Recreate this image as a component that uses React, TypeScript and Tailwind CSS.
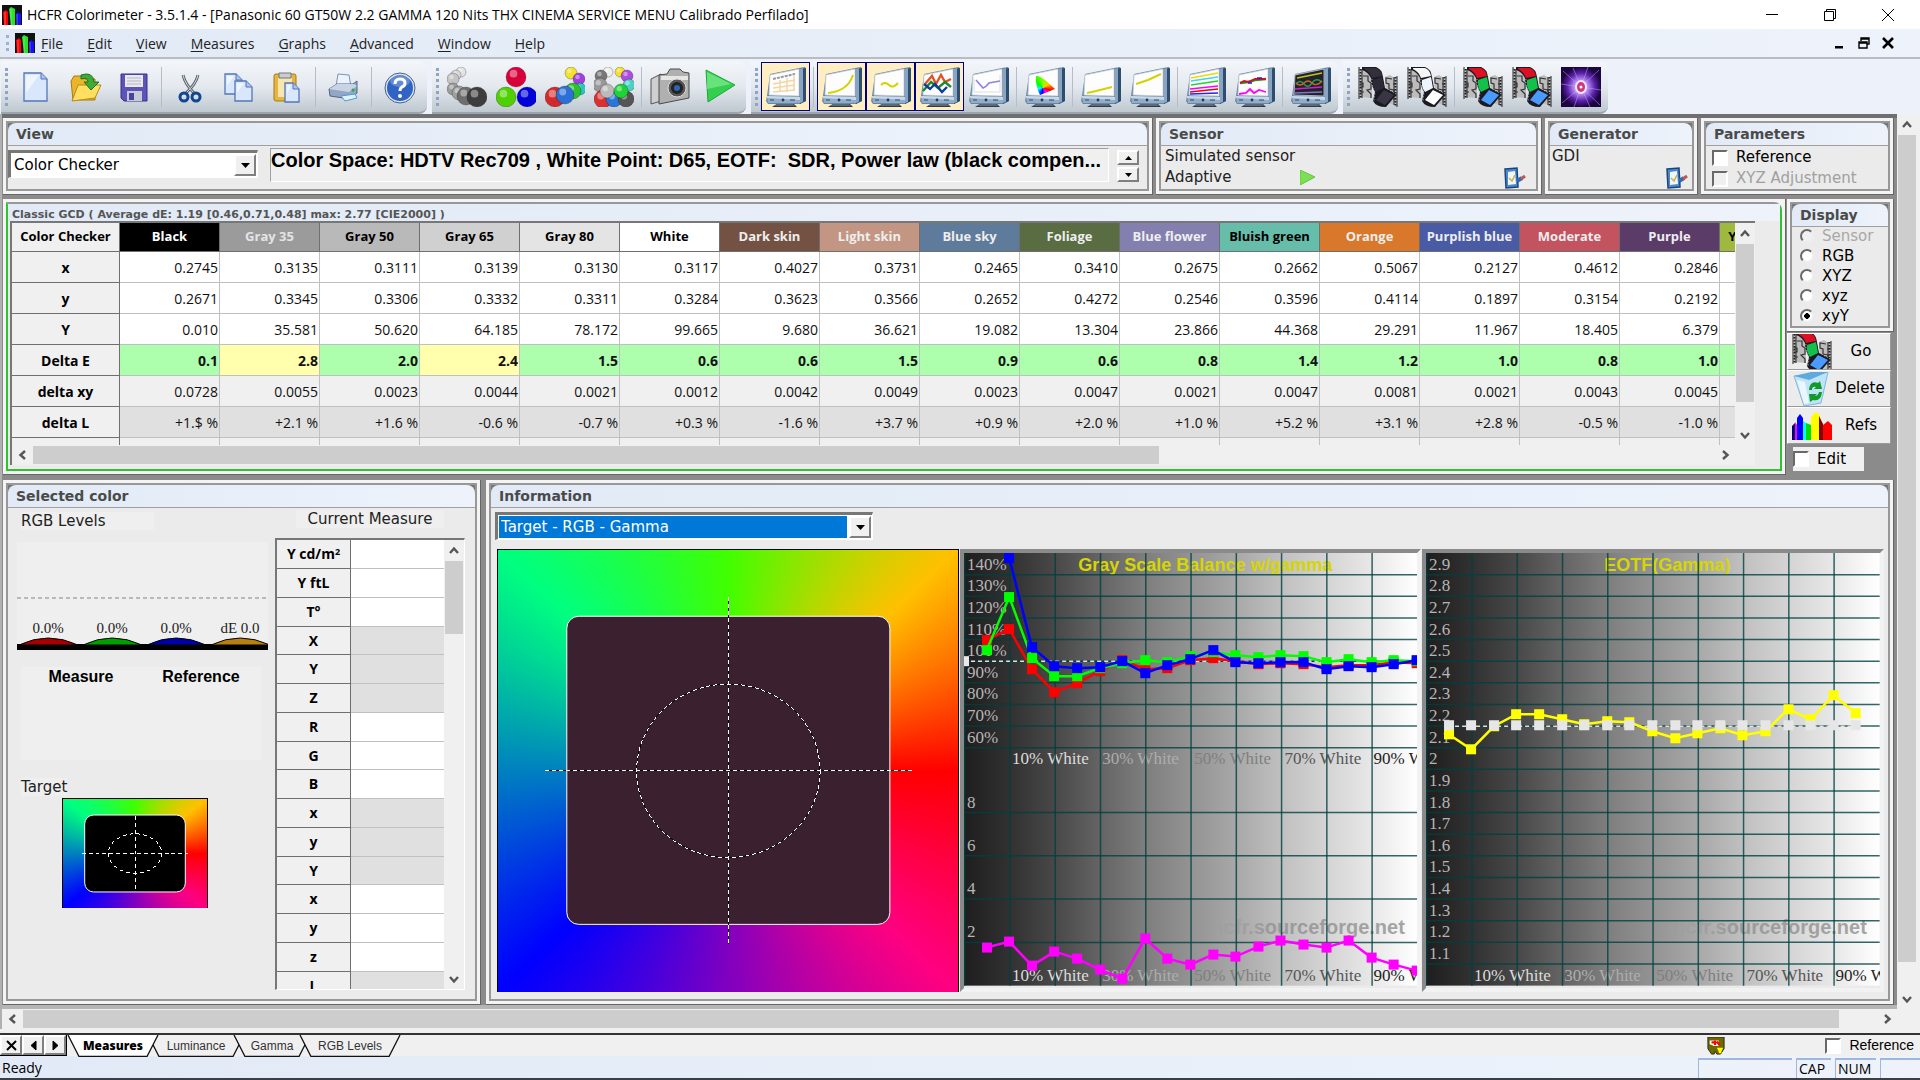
import { useState } from 'react';
import type { ReactNode } from 'react';

type Swatch = {
  name: string;
  head: string;
  x: string;
  y: string;
  Y: string;
  dE: string;
  dxy: string;
  dL: string;
};

const swatches: Swatch[] = [
  { name: 'Black', head: 'bg-black text-white', x: '0.2745', y: '0.2671', Y: '0.010', dE: '0.1', dxy: '0.0728', dL: '+1.$ %' },
  { name: 'Gray 35', head: 'bg-[#9b9b9b] text-[#e4e4e4]', x: '0.3135', y: '0.3345', Y: '35.581', dE: '2.8', dxy: '0.0055', dL: '+2.1 %' },
  { name: 'Gray 50', head: 'bg-[#b9b9b9] text-black', x: '0.3111', y: '0.3306', Y: '50.620', dE: '2.0', dxy: '0.0023', dL: '+1.6 %' },
  { name: 'Gray 65', head: 'bg-[#d0d0d0] text-black', x: '0.3139', y: '0.3332', Y: '64.185', dE: '2.4', dxy: '0.0044', dL: '-0.6 %' },
  { name: 'Gray 80', head: 'bg-[#e4e4e4] text-black', x: '0.3130', y: '0.3311', Y: '78.172', dE: '1.5', dxy: '0.0021', dL: '-0.7 %' },
  { name: 'White', head: 'bg-white text-black', x: '0.3117', y: '0.3284', Y: '99.665', dE: '0.6', dxy: '0.0012', dL: '+0.3 %' },
  { name: 'Dark skin', head: 'bg-[#745243] text-[#eeeeee]', x: '0.4027', y: '0.3623', Y: '9.680', dE: '0.6', dxy: '0.0042', dL: '-1.6 %' },
  { name: 'Light skin', head: 'bg-[#c29682] text-[#eeeeee]', x: '0.3731', y: '0.3566', Y: '36.621', dE: '1.5', dxy: '0.0049', dL: '+3.7 %' },
  { name: 'Blue sky', head: 'bg-[#5f7b9c] text-[#eeeeee]', x: '0.2465', y: '0.2652', Y: '19.082', dE: '0.9', dxy: '0.0023', dL: '+0.9 %' },
  { name: 'Foliage', head: 'bg-[#596c42] text-[#eeeeee]', x: '0.3410', y: '0.4272', Y: '13.304', dE: '0.6', dxy: '0.0047', dL: '+2.0 %' },
  { name: 'Blue flower', head: 'bg-[#8380b0] text-[#eeeeee]', x: '0.2675', y: '0.2546', Y: '23.866', dE: '0.8', dxy: '0.0021', dL: '+1.0 %' },
  { name: 'Bluish green', head: 'bg-[#66bdaa] text-black', x: '0.2662', y: '0.3596', Y: '44.368', dE: '1.4', dxy: '0.0047', dL: '+5.2 %' },
  { name: 'Orange', head: 'bg-[#d9782a] text-[#eeeeee]', x: '0.5067', y: '0.4114', Y: '29.291', dE: '1.2', dxy: '0.0081', dL: '+3.1 %' },
  { name: 'Purplish blue', head: 'bg-[#4a5ba5] text-[#eeeeee]', x: '0.2127', y: '0.1897', Y: '11.967', dE: '1.0', dxy: '0.0021', dL: '+2.8 %' },
  { name: 'Moderate', head: 'bg-[#c3535f] text-[#eeeeee]', x: '0.4612', y: '0.3154', Y: '18.405', dE: '0.8', dxy: '0.0043', dL: '-0.5 %' },
  { name: 'Purple', head: 'bg-[#5b3c69] text-[#eeeeee]', x: '0.2846', y: '0.2192', Y: '6.379', dE: '1.0', dxy: '0.0045', dL: '-1.0 %' },
];

const measureRows: { label: string; key: keyof Swatch; cell: string }[] = [
  { label: 'x', key: 'x', cell: 'bg-white' },
  { label: 'y', key: 'y', cell: 'bg-white' },
  { label: 'Y', key: 'Y', cell: 'bg-white' },
  { label: 'Delta E', key: 'dE', cell: 'bg-[#adffad] font-bold' },
  { label: 'delta xy', key: 'dxy', cell: 'bg-[#f0f0f0]' },
  { label: 'delta L', key: 'dL', cell: 'bg-[#e0e0e0]' },
];

const currentRows: { label: ReactNode; shaded?: boolean }[] = [
  { label: <>Y cd/m<sup className="text-[9px]">2</sup></> },
  { label: 'Y ftL' },
  { label: 'T°' },
  { label: 'X', shaded: true },
  { label: 'Y', shaded: true },
  { label: 'Z', shaded: true },
  { label: 'R' },
  { label: 'G' },
  { label: 'B' },
  { label: 'x', shaded: true },
  { label: 'y', shaded: true },
  { label: 'Y', shaded: true },
  { label: 'x' },
  { label: 'y' },
  { label: 'z' },
  { label: 'L', shaded: true },
];

const ui = "font-['DejaVu_Sans',sans-serif]";
const segoe = "font-['Open_Sans','Noto_Sans',sans-serif]";
const arial = "font-['Liberation_Sans',Arial,sans-serif]";

const bluebar = 'bg-linear-to-r from-[#e1eaf6] to-[#eef3fb]';
const raised = 'border-2 border-t-white border-l-white border-r-[#808080] border-b-[#808080] bg-[#f0f0f0]';
const sunken = 'border-2 border-t-[#696969] border-l-[#696969] border-r-white border-b-white';

/* ---------- small controls ---------- */

function Chevron({ dir }: { dir: 'up' | 'down' | 'left' | 'right' }) {
  const d = {
    up: 'M2 8 L6 3.5 L10 8',
    down: 'M2 4 L6 8.5 L10 4',
    left: 'M8 2 L3.5 6 L8 10',
    right: 'M4 2 L8.5 6 L4 10',
  }[dir];
  return (
    <svg width="12" height="12" viewBox="0 0 12 12" fill="none" stroke="#555" strokeWidth="2.4">
      <path d={d} />
    </svg>
  );
}

function VScroll({ thumb }: { thumb: string }) {
  return (
    <div className="flex w-5 shrink-0 flex-col items-center bg-[#f0f0f0] px-px">
      <button aria-label="Scroll up" className="flex h-[21px] shrink-0 items-center">
        <Chevron dir="up" />
      </button>
      <div className="w-full flex-1">
        <div className={`w-full bg-[#cdcdcd] ${thumb}`} />
      </div>
      <button aria-label="Scroll down" className="flex h-[21px] shrink-0 items-center">
        <Chevron dir="down" />
      </button>
    </div>
  );
}

function HScroll({ thumb }: { thumb: string }) {
  return (
    <div className="flex h-5 shrink-0 items-center bg-[#f0f0f0] py-px">
      <button aria-label="Scroll left" className="flex w-[21px] shrink-0 justify-center">
        <Chevron dir="left" />
      </button>
      <div className="h-full flex-1">
        <div className={`h-full bg-[#cdcdcd] ${thumb}`} />
      </div>
      <button aria-label="Scroll right" className="flex w-[21px] shrink-0 justify-center">
        <Chevron dir="right" />
      </button>
    </div>
  );
}

function Check({ label, disabled, className = '' }: { label: string; disabled?: boolean; className?: string }) {
  return (
    <label className={`flex items-center gap-2 ${disabled ? 'text-[#a0a0a0]' : 'text-black'} ${className}`}>
      <input
        type="checkbox"
        disabled={disabled}
        className={`size-4 shrink-0 appearance-none ${sunken} ${disabled ? 'bg-[#f0f0f0]' : 'bg-white'}`}
      />
      {label}
    </label>
  );
}

function Combo({ label, value, active, className = '' }: { label: string; value: string; active?: boolean; className?: string }) {
  return (
    <div className={`flex h-7 items-center border-t-3 border-l-3 border-r border-b border-t-[#777] border-l-[#777] border-r-white border-b-white bg-white p-px ${className}`}>
      <select
        aria-label={label}
        defaultValue={value}
        className={`h-full min-w-0 flex-1 appearance-none pl-0.5 text-[15px] ${ui} ${active ? 'bg-[#0078d7] text-white' : 'bg-white text-black'}`}
      >
        <option>{value}</option>
      </select>
      <span aria-hidden className={`ml-0.5 flex h-full w-[22px] items-center justify-center ${raised}`}>
        <svg width="9" height="5" viewBox="0 0 9 5"><path d="M0 0H9L4.5 5Z" /></svg>
      </span>
    </div>
  );
}

function Panel({ title, children, className = '', body = '' }: { title: string; children: ReactNode; className?: string; body?: string }) {
  return (
    <section className={`flex flex-col border-r border-b border-[#666] bg-[#f4f4f4] p-[3px] ${className}`}>
      <div className="flex min-h-0 flex-1 flex-col border-2 border-[#989898] bg-[#777]">
        <h2 className={`h-[22px] shrink-0 rounded-t-lg pl-2 text-[14px] leading-[23px] font-bold text-[#4a4a4a] ${ui} ${bluebar}`}>
          {title}
        </h2>
        <div className={`min-h-0 flex-1 border-t border-[#a0a0a0] bg-[#ebebeb] ${body}`}>{children}</div>
      </div>
    </section>
  );
}

/* ---------- icons ---------- */

function Icon({ children }: { children: ReactNode }) {
  return (
    <svg className="shrink-0" width="40" height="40" viewBox="0 0 40 40" fill="none">
      {children}
    </svg>
  );
}

function AppLogo() {
  return (
    <svg width="20" height="20" viewBox="0 0 20 20">
      <rect width="20" height="20" fill="#111" />
      <path d="M1 7L4 5L6 7V20H2Z" fill="#f00" />
      <path d="M7 4L9 2L13 4V20H9Z" fill="#2ae22a" />
      <path d="M14 9L16 7L19 9V20H15Z" fill="#11f" />
      <path d="M3 7v13M9 4v16M15 9v11" stroke="#fff" strokeOpacity=".35" />
    </svg>
  );
}

function Balls({ items }: { items: [number, number, number, string][] }) {
  return (
    <Icon>
      {items.map(([x, y, r, c], i) => (
        <g key={i}>
          <circle cx={x} cy={y} r={r} fill={c} stroke="#000" strokeOpacity=".35" strokeWidth=".7" />
          <circle cx={x - r / 4} cy={y - r / 3} r={r / 2.6} fill="#fff" fillOpacity=".4" />
        </g>
      ))}
    </Icon>
  );
}

function Monitor({ children, dark }: { children?: ReactNode; dark?: boolean }) {
  return (
    <Icon>
      <path d="M14 35 L26 35 L31 40 H6 Z" fill="#2f3c49" />
      <path d="M11 37 L27 37 L29 39 H8 Z" fill="#5d6b78" />
      <path d="M4 7 L33 1 L39 0 L40 2 V34 L34 37 H2 L0 34 L1 29 Z" fill="#6b86a1" />
      <path d="M34 2 L40 1 V34 L34 37 Z" fill="#2f4e6e" />
      <path d="M34 2 L37 1 V35 L34 36 Z" fill="#88a6c4" />
      <path d="M1 29 L34 30 V36 L2 36 Z" fill="#91adca" />
      <path d="M1 29 L34 30 V33 L1 31 Z" fill="#c9d8e7" />
      <path d="M4 8 L33 2 V29 L3 28 Z" fill={dark ? '#22222a' : '#fdfdfd'} stroke="#c3cfdb" strokeWidth=".8" />
      <circle cx="17" cy="33" r="1.4" fill="#1c3c62" />
      <path d="M4 33h4M24 33h5" stroke="#2f4a68" />
      {children}
    </Icon>
  );
}

function Film({ frames }: { frames: [string, string, string] }) {
  return (
    <Icon>
      <path d="M2 2 L14 8 V31 L2 30 Z M27 10 L32 8 L38 12 V38 L28 36 Z" fill="#bcbcbc" />
      <path d="M5 9h5v5l3 2v6l-4 1 4 4v4M2 16h3v4h-3M2 25h4M34 12l-6-1v5l3 1v5l5 1v4l-4 2M38 17h-3M38 32h-3" stroke="#333" strokeWidth="1.2" />
      <path d="M1 0V32M4 2V31M36 10V38M39 9V40" stroke="#222" strokeWidth="1" />
      <path d="M2.500 2V31M37.500 10V39" stroke="#222" strokeWidth="2" strokeDasharray="1.500 1.500" />
      <path d="M4 0 H18 Q24 2 25 10 L27 21 L39 27 L28 40 Q18 40 15 34 L17 25 Q13 18 13 11 Q10 5 4 3 Z" fill="#1b1a22" />
      <path d="M6 1 H18 Q23 3 24 9 L14 11 Q12 5 6 2 Z" fill={frames[0]} />
      <path d="M15 13 L24 10 L26 21 L18 25 Q14 20 15 13 Z" fill={frames[1]} />
      <path d="M26 23 L36 28 L27 38 L18 33 Z" fill={frames[2]} />
      <path d="M14 12 Q13 19 17 25 L16 34M26 11 L28 21 L38 27" stroke="#ddd" strokeWidth=".8" strokeDasharray="1 2" />
    </Icon>
  );
}

function PageShape({ x = 0, y = 0, w = 23, h = 28 }: { x?: number; y?: number; w?: number; h?: number }) {
  return (
    <g transform={`translate(${x} ${y})`}>
      <path d={`M0 0 H${w - 6} L${w} 6 V${h} H0 Z`} fill="#d8e7fb" stroke="#5475b8" strokeWidth="1.3" />
      <path d={`M${w - 6} 0 V6 H${w}`} fill="#a9c5ef" stroke="#5475b8" strokeWidth="1" />
      <path d={`M2 2 H${w - 8} L2 ${h - 8} Z`} fill="#fff" fillOpacity=".6" />
    </g>
  );
}

const filmDark: [string, string, string] = ['#332f3b', '#2d2a38', '#3a3545'];
const filmLight: [string, string, string] = ['#f6f6f6', '#eef4fb', '#fff'];
const filmRgb: [string, string, string] = ['#dc1022', '#12c04a', '#4a9bff'];

const icons = {
  blank: <Icon><PageShape x={8} y={6} /></Icon>,
  open: (
    <Icon>
      <path d="M6 14 L9 9 H17 L20 12 H30 V33 H8 Z" fill="#e8b52c" stroke="#a87a11" />
      <path d="M7 34 L13 18 H36 L30 31 Z" fill="#ffdf62" stroke="#b98a17" />
      <path d="M16 8 Q28 4 29 15 H34 L26 23 L19 15 H23 Q23 10 16 12 Z" fill="#3faa35" stroke="#1e7420" />
    </Icon>
  ),
  save: (
    <Icon>
      <path d="M7 7 H33 V34 H10 L7 31 Z" fill="#5c54b8" stroke="#37318a" />
      <path d="M11 8 H29 V20 H11 Z" fill="#e9e9f0" />
      <path d="M13 11h14M13 14h14M13 17h14" stroke="#b7b7c4" />
      <path d="M13 24 H28 V34 H13 Z" fill="#c9cad8" />
      <path d="M15 26 H20 V33 H15 Z" fill="#4a4499" />
    </Icon>
  ),
  cut: (
    <Icon>
      <path d="M13 8 Q15 17 24 26 M28 8 Q26 17 16 26" stroke="#5d6670" strokeWidth="3" />
      <path d="M13 8 Q15 17 24 26 M28 8 Q26 17 16 26" stroke="#d3d8de" strokeWidth="1" />
      <circle cx="14" cy="30" r="4" stroke="#12458f" strokeWidth="3" />
      <circle cx="26" cy="30" r="4" stroke="#12458f" strokeWidth="3" />
    </Icon>
  ),
  copy: <Icon><PageShape x={6} y={7} w={17} h={20} /><PageShape x={16} y={14} w={17} h={20} /></Icon>,
  paste: (
    <Icon>
      <rect x="6" y="7" width="22" height="27" rx="2" fill="#e4b63d" stroke="#a57a15" />
      <path d="M10 11 H24 V30 H10 Z" fill="#f7e6b0" />
      <path d="M11 6 H23 V11 H11 Z" fill="#c8ccd4" stroke="#777" />
      <PageShape x={17} y={16} w={14} h={19} />
    </Icon>
  ),
  print: (
    <Icon>
      <path d="M12 19 L14 7 L25 8 L27 20 Z" fill="#e9f2fd" stroke="#7d93b6" />
      <path d="M5 22 L13 17 H29 L33 14 V26 L26 32 L6 29 Z" fill="#93a6c3" stroke="#516584" />
      <path d="M5 22 L13 17 H30 L33 19 L25 25 Z" fill="#c8d4e5" />
      <path d="M17 29 L31 27 L33 31 L21 34 Z" fill="#dff2ff" stroke="#4f9bd0" />
      <circle cx="29" cy="23" r="1.5" fill="#2a5" />
    </Icon>
  ),
  help: (
    <Icon>
      <circle cx="20" cy="21" r="14" fill="#2f63c4" stroke="#dbe4f3" strokeWidth="2" />
      <circle cx="20" cy="21" r="15" stroke="#4a5f8c" strokeWidth="1" />
      <ellipse cx="20" cy="14" rx="10" ry="6" fill="#fff" fillOpacity=".25" />
      <path d="M15 17 Q15 12 20 12 Q25 12 25 16 Q25 19 22 20 Q20 21 20 24" stroke="#fff" strokeWidth="3" />
      <circle cx="20" cy="29" r="2" fill="#fff" />
    </Icon>
  ),
  grayBalls: (
    <Balls items={[[14, 5, 5, '#e4e4e4'], [9, 8, 5, '#d8d8d8'], [6, 12, 6, '#c4c4c4'], [6, 22, 6, '#9c9c9c'], [12, 26, 7, '#a0a0a0'], [19, 29, 9, '#6e6e6e'], [30, 30, 10, '#3d3d3d']]} />
  ),
  primaries: <Balls items={[[20, 10, 10, '#d8003a'], [10, 30, 10, '#4fd000'], [31, 30, 10, '#0000d8']]} />,
  colorBalls: (
    <Balls items={[[26, 6, 6, '#f5e02a'], [34, 12, 6, '#a23fe0'], [35, 22, 6, '#26c8c0'], [28, 24, 8, '#2fc030'], [10, 30, 10, '#d02a2a'], [20, 28, 9, '#2c6fd6']]} />
  ),
  ringBalls: (
    <Balls items={[[14, 5, 5, '#eee'], [26, 5, 5, '#f5e02a'], [7, 9, 6, '#777'], [33, 9, 6, '#b04be0'], [6, 18, 7, '#999'], [35, 18, 6, '#4bd0c4'], [9, 32, 9, '#d93030'], [20, 32, 8, '#2b74d8'], [32, 32, 8, '#555'], [13, 24, 7, '#bbb'], [27, 24, 7, '#1fd336']]} />
  ),
  camera: (
    <Icon>
      <path d="M1 12 L11 7 V34 L1 37 Z" fill="#cfcfcf" stroke="#555" />
      <path d="M9 8 L17 7 L20 2 H30 L33 5 L39 6 V31 L9 37 Z" fill="#b0b0b0" stroke="#4a4a4a" />
      <path d="M11 9 H38 V13 H11 Z" fill="#e6e6e6" />
      <circle cx="27" cy="21" r="9" fill="#555" stroke="#ddd" />
      <circle cx="27" cy="21" r="6" fill="#222" />
      <circle cx="27" cy="21" r="3" fill="#2f63b4" />
    </Icon>
  ),
  play: (
    <Icon>
      <path d="M7 3 L36 18 L9 35 Z" fill="#35cf4f" stroke="#1ea739" />
      <path d="M8 5 L32 17 L8 22 Z" fill="#8bf09a" fillOpacity=".6" />
    </Icon>
  ),
  monTable: (
    <Monitor>
      <path d="M7 12 L29 7" stroke="#999" strokeWidth="2" strokeDasharray="3 1" />
      <path d="M7 17l22-4M7 21l22-3M7 25l22-2M14 13v12M21 11v14M28 9v15" stroke="#f2d6a4" strokeWidth="1.5" />
    </Monitor>
  ),
  monCurve: <Monitor><path d="M6 26 Q26 24 31 8" stroke="#d6d200" strokeWidth="2" /></Monitor>,
  monWave: <Monitor><path d="M10 18 q4-4 8 0 t9-2" stroke="#d6d200" strokeWidth="2" /></Monitor>,
  monRgb: (
    <Monitor>
      <path d="M5 17 L12 9 L16 17 L21 8 L25 15 L31 12" stroke="#e0532a" strokeWidth="2.4" />
      <path d="M3 24 L11 15 L18 21 L25 15 L31 20" stroke="#1a8a2a" strokeWidth="2.4" />
      <path d="M4 17 L10 22 L15 17 L22 25 L27 20" stroke="#113a9a" strokeWidth="2.4" />
    </Monitor>
  ),
  monPurple: (
    <Monitor>
      <path d="M5 12V25H31V8" stroke="#ddd" />
      <path d="M7 13 L14 21 Q17 20 20 16 L31 14" stroke="#8d84e0" strokeWidth="1.6" />
    </Monitor>
  ),
  monLow: <Monitor><path d="M6 26 L15 24 L31 20" stroke="#d6d200" strokeWidth="2" /></Monitor>,
  monRise: <Monitor><path d="M6 17 L18 13 L31 7" stroke="#d6d200" strokeWidth="2" /></Monitor>,
  monLines: (
    <Monitor>
      <path d="M5 11 L32 6" stroke="#e8dc00" strokeWidth="1.3" />
      <path d="M5 14 L32 10" stroke="#39d9e6" strokeWidth="1.3" />
      <path d="M5 18 L32 14" stroke="#2ad02a" strokeWidth="1.3" />
      <path d="M4 22 L32 19" stroke="#f0f" strokeWidth="1.3" />
      <path d="M4 25 L32 22" stroke="#e00" strokeWidth="1.3" />
      <path d="M4 27 L32 26" stroke="#22f" strokeWidth="1.3" />
    </Monitor>
  ),
  monTwo: (
    <Monitor>
      <path d="M5 16 L13 15 L20 13 L31 12" stroke="#1b9a1b" strokeWidth="2.4" />
      <path d="M5 16 L9 14 L14 15 L20 12 L31 12" stroke="#d0122a" strokeWidth="1.8" />
      <path d="M22 11H27M13 16H17" stroke="#22c" strokeWidth="1.5" />
      <path d="M4 27 L11 26 L15 22 L19 26 L24 23 L31 25" stroke="#f0f" strokeWidth="1.8" />
    </Monitor>
  ),
  monDark: (
    <Monitor dark>
      <path d="M6 11 L31 6" stroke="#c8c020" strokeWidth="1.4" />
      <path d="M5 17 q4-5 8 0 t8-1 t10-1" stroke="#1fa052" strokeWidth="1.4" />
      <path d="M5 16 q4 4 8 0 t8 0 t10-2" stroke="#c46a28" strokeWidth="1.4" />
      <path d="M4 22 L31 20" stroke="#d020d0" strokeWidth="1.4" />
      <path d="M4 26 L31 25" stroke="#7d78c8" strokeWidth="1.4" />
    </Monitor>
  ),
  filmDark: <Film frames={filmDark} />,
  filmLight: <Film frames={filmLight} />,
  filmRgb: <Film frames={filmRgb} />,
  burst: (
    <Icon>
      <defs>
        <radialGradient id="burst">
          <stop offset="0" stopColor="#fff" />
          <stop offset=".35" stopColor="#b58cf0" />
          <stop offset=".7" stopColor="#5a20a8" />
          <stop offset="1" stopColor="#1c0540" />
        </radialGradient>
      </defs>
      <rect width="40" height="40" fill="url(#burst)" />
      <path d="M20 20 L2 4M20 20 L38 3M20 20 L1 36M20 20 L39 38M20 20 L12 1M20 20 L27 0M20 20 L13 40M20 20 L29 40M20 20 L0 17M20 20 L40 23" stroke="#c9a6ff" strokeOpacity=".5" />
      <ellipse cx="20" cy="20" rx="6" ry="7" fill="#efe5ff" />
      <ellipse cx="20" cy="20" rx="4" ry="5" fill="#cc3a78" />
      <circle cx="20" cy="20" r="1.500" fill="#fff" />
    </Icon>
  ),
};

function WheelMonitor() {
  return (
    <Monitor>
      <defs>
        <clipPath id="gamut"><path d="M11 9 Q16 8 30 22 L15 28 Q10 18 11 9 Z" /></clipPath>
      </defs>
      <foreignObject width="40" height="40" clipPath="url(#gamut)">
        <div className="size-10 bg-[conic-gradient(from_0deg_at_45%_52%,#8f0,#fc0_60deg,#f00_105deg,#f0f_150deg,#00f_190deg,#0ff_260deg,#0f0_310deg,#8f0)]" />
      </foreignObject>
    </Monitor>
  );
}

function SensorConfig() {
  return (
    <svg width="22" height="22" viewBox="0 0 22 22" fill="none">
      <path d="M1 2 L13 1 L14 20 L2 21 Z" fill="#4d87cc" stroke="#1b447f" strokeWidth="1.5" />
      <path d="M4 5 L11 4 L12 17 L4 18 Z" fill="#eef5fc" />
      <path d="M5 11 L8 14 L11 8" stroke="#c9b24a" strokeWidth="1.6" />
      <path d="M13 14 L18 11" stroke="#2f6bb5" strokeWidth="4" />
      <path d="M17 12 L21 9" stroke="#c0574c" strokeWidth="3" />
    </svg>
  );
}

/* ---------- toolbar ---------- */

type Tool = { label: string; icon: ReactNode; on?: boolean } | 'sep';

const toolGroups: Tool[][] = [
  [
    { label: 'New', icon: icons.blank },
    { label: 'Open', icon: icons.open },
    { label: 'Save', icon: icons.save },
    'sep',
    { label: 'Cut', icon: icons.cut },
    { label: 'Copy', icon: icons.copy },
    { label: 'Paste', icon: icons.paste },
    'sep',
    { label: 'Print', icon: icons.print },
    'sep',
    { label: 'About', icon: icons.help },
  ],
  [
    { label: 'Measure grays', icon: icons.grayBalls },
    { label: 'Measure primaries', icon: icons.primaries },
    { label: 'Measure secondaries', icon: icons.colorBalls },
    { label: 'Measure all', icon: icons.ringBalls },
    'sep',
    { label: 'Snapshot', icon: icons.camera },
    { label: 'Continuous measures', icon: icons.play },
  ],
  [
    { label: 'Measures', icon: icons.monTable, on: true },
    'sep',
    { label: 'Luminance', icon: icons.monCurve, on: true },
    { label: 'Gamma', icon: icons.monWave, on: true },
    { label: 'RGB levels', icon: icons.monRgb, on: true },
    { label: 'Color temperature', icon: icons.monPurple },
    'sep',
    { label: 'CIE diagram', icon: <WheelMonitor /> },
    'sep',
    { label: 'Near black', icon: icons.monLow },
    { label: 'Near white', icon: icons.monRise },
    'sep',
    { label: 'Saturation luminance', icon: icons.monLines },
    { label: 'Saturation shift', icon: icons.monTwo },
    'sep',
    { label: 'Combined graph', icon: icons.monDark },
  ],
  [
    { label: 'Black film', icon: icons.filmDark },
    { label: 'White film', icon: icons.filmLight },
    'sep',
    { label: 'Color film', icon: icons.filmRgb },
    { label: 'Saturation film', icon: icons.filmRgb },
    { label: 'Optimize', icon: icons.burst },
  ],
];

function ToolGroup({ tools }: { tools: Tool[] }) {
  return (
    <div role="toolbar" className="flex items-center rounded-r-lg border-b-2 border-[#9aa5b0] bg-linear-to-b from-[#f3f6fa] via-[#e4e9ef] to-[#bfc8d0] pr-[3px] pl-1">
      <span className="mr-[3px] h-[38px] border-l-3 border-dotted border-[#8fa4c4]" />
      {tools.map((tool, i) =>
        tool === 'sep' ? (
          <span key={i} className="mx-[3px] h-10 w-px bg-[#b4bec9]" />
        ) : (
          <button
            key={i}
            title={tool.label}
            className={`flex h-[49px] w-[49px] items-center justify-center ${tool.on ? 'border border-[#000080] bg-[#ffeec2]' : ''}`}
          >
            {tool.icon}
          </button>
        )
      )}
    </div>
  );
}

/* ---------- graphs ---------- */

const STEP = 22.6;
const UNIT = 21.6;

const series = {
  red: [87, 76, 116, 139, 130, 118, 107, 116, 115, 107, 105, 108, 111, 110, 111, 114, 112, 112, 109, 110],
  green: [97, 44, 105, 123, 123, 115, 110, 107, 109, 103, 99, 102, 104, 102, 103, 109, 106, 109, 107, 108],
  blue: [5, 94, 113, 115, 114, 108, 120, 112, 106, 97, 109, 110, 109, 109, 116, 113, 114, 111, 107],
  deltaE: [394, 388, 412, 398, 405, 416, 425, 385, 405, 411, 401, 403, 393, 387, 391, 394, 387, 404, 411, 417],
  gamma: [181, 196, 173, 161, 161, 166, 171, 168, 169, 178, 185, 180, 175, 182, 178, 156, 166, 142, 160],
  target: Array.from({ length: 19 }, () => 172),
};

const xLabels = [
  { text: '10% White', x: 48, fill: '#dcdcdc' },
  { text: '30% White', x: 138, fill: '#adadad' },
  { text: '50% White', x: 230, fill: '#7f7f7f' },
  { text: '70% White', x: 320, fill: '#555' },
  { text: '90% White', x: 409, fill: '#222' },
];

const ramp = ['#1e1e1e', '#313131', '#484848', '#646464', '#7e7e7e', '#939393', '#a8a8a8', '#c0c0c0', '#d4d4d4', '#e8e8e8', '#ffffff'];

function Series({ data, color, from = 1, line = true }: { data: number[]; color: string; from?: number; line?: boolean }) {
  return (
    <g fill={color}>
      {line && (
        <polyline
          points={data.map((y, i) => `${(i + from) * STEP},${y}`).join(' ')}
          fill="none"
          stroke={color}
          strokeWidth="2.5"
        />
      )}
      {data.map((y, i) => (
        <rect key={i} x={Math.round((i + from) * STEP) - 5} y={y - 5} width="10" height="10" />
      ))}
    </g>
  );
}

function Graph({ id, title, rows, yLabels, labelRows, children }: {
  id: string;
  title: string;
  rows: number[];
  yLabels: { text: string; row: number }[];
  labelRows: number[];
  children: ReactNode;
}) {
  return (
    <div className="border-4 border-t-[#8a8a8a] border-r-[#f2f2f2] border-b-[#f2f2f2] border-l-[#8a8a8a]">
      <svg className="block w-full" viewBox="0 0 453 432" role="img" aria-label={title}>
        <defs>
          <linearGradient id={`${id}-bg`}>
            {ramp.map((c, i) => <stop key={c} offset={i / 10} stopColor={c} />)}
          </linearGradient>
          <linearGradient id={`${id}-mark`}>
            <stop offset="0" stopColor="#9a9a9a" stopOpacity=".2" />
            <stop offset=".3" stopColor="#999" />
            <stop offset="1" stopColor="#a5a5a5" />
          </linearGradient>
        </defs>
        <rect width="453" height="432" fill={`url(#${id}-bg)`} />
        <text x="247" y="380" className={`text-[20px] font-bold ${arial}`} fill={`url(#${id}-mark)`}>
          hcfr.sourceforge.net
        </text>
        <text x="241" y="18" textAnchor="middle" className={`text-[18px] font-bold ${arial}`} fill="#d6d600">
          {title}
        </text>
        <g className="font-['Liberation_Serif',serif] text-[17px]">
          {yLabels.map((l) => (
            <text key={l.text} x="3" y={l.row * UNIT - 5} fill="#b6b6b6">{l.text}</text>
          ))}
          {labelRows.map((y) =>
            xLabels.map((l) => <text key={`${y}${l.text}`} x={l.x} y={y} fill={l.fill}>{l.text}</text>)
          )}
        </g>
        <g stroke="#004040" strokeOpacity=".8" strokeWidth="1.5">
          {Array.from({ length: 10 }, (_, i) => (
            <path key={i} d={`M${i * STEP * 2 + 0.7} 0V432`} />
          ))}
          {rows.map((r) => <path key={r} d={`M0 ${r * UNIT}H453`} />)}
        </g>
        {children}
      </svg>
    </div>
  );
}

function TargetView({ small }: { small?: boolean }) {
  const wheel = small
    ? 'aspect-[146/110] bg-[conic-gradient(#40ff00_0deg,#ffc000_53deg,#ff0000_90deg,#ff0080_127deg,#8000c0_180deg,#0000ff_233deg,#0080c0_270deg,#00ff80_307deg,#40ff00_360deg)]'
    : 'aspect-[461/442] bg-[conic-gradient(#40ff00_0deg,#ffc000_46deg,#ff0000_90deg,#ff0080_134deg,#8000c0_180deg,#0000ff_226deg,#0080c0_270deg,#00ff80_314deg,#40ff00_360deg)]';
  const w = small ? 146 : 461;
  const h = small ? 110 : 442;
  const box = small ? [22, 16, 102, 78, 9] : [69, 66, 324, 309, 12];
  const arm = small ? [54, 38] : [184, 174];
  const ring = small ? [27, 20] : [92, 87];
  const cx = Math.round(w / 2);
  const cy = Math.round(h / 2);
  return (
    <div className={`relative w-full border border-b-0 border-black ${wheel}`}>
      <svg className="absolute inset-0 size-full" viewBox={`0 0 ${w} ${h}`} fill="none" role="img" aria-label="Target">
        <rect x={box[0]} y={box[1]} width={box[2]} height={box[3]} rx={box[4]} fill={small ? '#000' : '#3b2030'} stroke="#fff" />
        {['#000', '#fff'].map((c) => (
          <g key={c} stroke={c} strokeDasharray={c === '#fff' ? '4 3' : undefined} shapeRendering="crispEdges">
            <path d={`M${cx - arm[0]} ${cy}H${cx + arm[0]}M${cx} ${cy - arm[1]}V${cy + arm[1]}`} />
            <ellipse cx={cx} cy={cy} rx={ring[0]} ry={ring[1]} />
          </g>
        ))}
      </svg>
    </div>
  );
}

/* ---------- panels ---------- */

function MeasureTable() {
  const head = 'border-r border-b border-[#6f6f6f] bg-[#f0f0f0] text-center font-bold text-black';
  return (
    <div className="flex min-h-0 flex-1 flex-col">
      <div className="flex h-[222px]">
        <div className="min-w-0 flex-1 overflow-hidden bg-white">
          <table className={`w-[1808px] table-fixed border-separate border-spacing-0 text-[14px] text-[#111] ${segoe}`}>
            <colgroup>
              <col className="w-[108px]" />
            </colgroup>
            <thead>
              <tr className="h-[29px]">
                <th scope="col" className={`text-[13px] whitespace-nowrap ${head}`}>Color Checker</th>
                {swatches.map((s) => (
                  <th key={s.name} scope="col" className={`border-r border-b border-[#6f6f6f] text-[13px] font-bold whitespace-nowrap ${s.head}`}>
                    {s.name}
                  </th>
                ))}
                <th scope="col" className="border-b border-[#6f6f6f] bg-[#9fb93f] text-[13px] font-bold whitespace-nowrap text-black">Yellow green</th>
              </tr>
            </thead>
            <tbody>
              {measureRows.map((row) => (
                <tr key={row.label} className="h-[31px]">
                  <th scope="row" className={head}>{row.label}</th>
                  {swatches.map((s) => (
                    <td
                      key={s.name}
                      className={`border-r border-b border-[#c0c0c0] pr-px text-right ${
                        row.key === 'dE' && Number(s.dE) > 2.2 ? 'bg-[#ffffad] font-bold' : row.cell
                      }`}
                    >
                      {s[row.key]}
                    </td>
                  ))}
                  <td className={`border-b border-[#c0c0c0] ${row.cell}`} />
                </tr>
              ))}
              <tr className="h-[31px]">
                <th className={head} />
                {swatches.map((s) => <td key={s.name} className="border-r border-[#c0c0c0] bg-[#f0f0f0]" />)}
                <td className="bg-[#f0f0f0]" />
              </tr>
            </tbody>
          </table>
        </div>
        <VScroll thumb="h-[88%]" />
      </div>
      <div className="mr-5">
        <HScroll thumb="w-[67%]" />
      </div>
    </div>
  );
}

function SelectedColor() {
  const label = `w-max bg-[#efefef] text-[15px] leading-[18px] text-[#222] ${ui}`;
  const bumps = [
    { text: '0.0%', color: '#a80000' },
    { text: '0.0%', color: '#00a000' },
    { text: '0.0%', color: '#0000a8' },
    { text: 'dE 0.0', color: '#b88010' },
  ];
  return (
    <Panel title="Selected color" className="w-[478px] shrink-0" body="flex">
      <div className="w-[267px] shrink-0 pt-1 pl-[9px]">
        <div className={`${label} ml-1 pr-12`}>RGB Levels</div>
        <svg className="mt-3 block bg-[#efefef]" width="251" height="108" viewBox="0 0 251 108">
          <path d="M0 56H251" stroke="#a8a8a8" strokeWidth="1.5" strokeDasharray="4 3" />
          <rect y="102" width="251" height="6" />
          {bumps.map((b, i) => (
            <g key={i}>
              <path d={`M${i * 64 + 2} 103Q${i * 64 + 31} 89 ${i * 64 + 61} 103Z`} fill={b.color} stroke="#000" />
              <text x={i === 3 ? 223 : i * 64 + 31} y="91" textAnchor="middle" className="font-['Liberation_Serif',serif] text-[15px]" fill="#222">
                {b.text}
              </text>
            </g>
          ))}
        </svg>
        <div className={`mt-[17px] ml-1 grid h-[93px] w-[240px] grid-cols-2 bg-[#efefef] text-center text-[16px] leading-[20px] font-bold ${arial}`}>
          <span>Measure</span>
          <span>Reference</span>
        </div>
        <div className={`${label} mt-[18px] ml-1`}>Target</div>
        <div className="mt-0.5 ml-[45px] w-[146px]">
          <TargetView small />
        </div>
      </div>
      <div className="flex min-w-0 flex-1 flex-col pt-0.5 pr-2.5 pb-2">
        <div className={`mb-2.5 self-center text-center ${label} px-3`}>Current Measure</div>
        <div className="flex h-[452px] border-t-2 border-l-2 border-[#777] border-r border-b border-r-white border-b-white">
          <div className="min-w-0 flex-1 overflow-hidden">
            <table className={`w-full table-fixed border-separate border-spacing-0 text-[14px] leading-[18px] ${segoe}`}>
              <colgroup>
                <col className="w-[74px]" />
              </colgroup>
              <tbody>
                {currentRows.map((row, i) => (
                  <tr key={i} className={i % 4 === 3 ? 'h-7' : 'h-[29px]'}>
                    <th scope="row" className="border-r border-b border-[#6f6f6f] bg-[#f0f0f0] font-bold">{row.label}</th>
                    <td className={`border-b border-[#c0c0c0] ${row.shaded ? 'bg-[#e0e0e0]' : 'bg-white'}`} />
                  </tr>
                ))}
              </tbody>
            </table>
          </div>
          <VScroll thumb="h-[18%]" />
        </div>
      </div>
    </Panel>
  );
}

const topLabels = ['140%', '130%', '120%', '110%', '100%', '90%', '80%', '70%', '60%'].map((text, i) => ({ text, row: i + 1 }));
const lowLabels = ['8', '6', '4', '2'].map((text, i) => ({ text, row: 12 + i * 2 }));
const gammaLabels = Array.from({ length: 19 }, (_, i) => ({ text: String((29 - i) / 10), row: i + 1 }));

function Information() {
  return (
    <Panel title="Information" className="min-w-0 flex-1" body="px-1 pt-1">
      <Combo label="Information view" value="Target - RGB - Gamma" active className="w-[378px]" />
      <div className="mt-[9px] grid grid-cols-3 gap-px pl-0.5">
        <TargetView />
        <Graph
          id="balance"
          title="Gray Scale Balance w/gamma"
          rows={[1, 2, 3, 4, 6, 7, 8, 9, 12, 14, 16, 18]}
          yLabels={[...topLabels, ...lowLabels]}
          labelRows={[211, 427]}
        >
          <path d="M0 108H453" stroke="#004040" strokeWidth="1.5" />
          <path d="M0 108H453" stroke="#e0e0e0" strokeWidth="1.5" strokeDasharray="4 3" />
          <rect y="103" width="5" height="10" fill="#e8e8e8" />
          <Series data={series.red} color="#ff0000" />
          <Series data={series.green} color="#00ff00" />
          <Series data={series.blue} color="#0000ff" from={2} />
          <Series data={series.deltaE} color="#ff00ff" />
        </Graph>
        <Graph
          id="eotf"
          title="EOTF(Gamma)"
          rows={Array.from({ length: 19 }, (_, i) => i + 1)}
          yLabels={gammaLabels}
          labelRows={[427]}
        >
          <path d="M22 173H430" stroke="#e0e0e0" strokeWidth="1.5" strokeDasharray="4 3" />
          <Series data={series.gamma} color="#ffff00" />
          <Series data={series.target} color="#e6e6e6" line={false} />
        </Graph>
      </div>
    </Panel>
  );
}

function ColorRow() {
  const modes = ['Sensor', 'RGB', 'XYZ', 'xyz', 'xyY'];
  const action = `flex h-[37px] w-[104px] items-center border-t border-l border-white border-r border-b border-r-[#999] border-b-[#999] bg-[#ececec] pl-1 text-[15px] ${ui}`;
  return (
    <div className="flex gap-px">
      <section className="flex min-w-0 flex-1 flex-col border-r border-b border-[#666] bg-[#f4f4f4] p-[3px]">
        <div className="flex flex-1 flex-col rounded-tr-lg border-2 border-[#2fc32f] border-t-[#989898] bg-[#ebebeb]">
          <h2 className={`h-[17px] shrink-0 overflow-hidden pl-1 text-[11px] leading-[21px] font-bold text-[#555] ${ui} ${bluebar}`}>
            Classic GCD ( Average dE: 1.19 [0.46,0.71,0.48] max: 2.77 [CIE2000] )
          </h2>
          <div className="mr-[25px] mb-1 ml-0.5 flex flex-1 flex-col border-t-2 border-l-2 border-[#777] bg-[#f0f0f0]">
            <MeasureTable />
          </div>
        </div>
      </section>
      <aside className="w-[107px] shrink-0">
        <Panel title="Display" className="mb-px" body="px-2">
          <fieldset className={`-mt-px text-[15px] leading-[20px] ${ui}`}>
            {modes.map((m) => (
              <label key={m} className={`flex items-center gap-2 ${m === 'Sensor' ? 'text-[#a8a8a8]' : 'text-black'}`}>
                <input
                  type="radio"
                  name="display"
                  defaultChecked={m === 'xyY'}
                  disabled={m === 'Sensor'}
                  className="size-[14px] appearance-none rounded-full border-2 border-t-[#696969] border-r-[#eee] border-b-[#eee] border-l-[#696969] bg-white checked:bg-[radial-gradient(#000_38%,#fff_42%)] disabled:bg-[#f0f0f0]"
                />
                {m}
              </label>
            ))}
          </fieldset>
        </Panel>
        <button className={`overflow-hidden ${action}`}>
          {icons.filmRgb}
          <span className="flex-1 text-center">Go</span>
        </button>
        <button className={action}>
          <svg className="shrink-0" width="38" height="34" viewBox="0 0 38 34">
            <path d="M2 4 L36 0 L29 31 L12 34 Z" fill="#bfe3f8" stroke="#7fb8dc" />
            <path d="M2 4 L17 8 L36 0 L19 0 Z" fill="#5fa9dc" />
            <path d="M5 8 L13 10 L17 31 L12 32 Z" fill="#eaf7ff" />
            <path d="M17 18 Q18 8 26 11 L28 9 L30 17 H22 L24 15 Q20 14 20 18 Z M30 20 Q29 30 21 28 L18 30 L17 22 H25 L23 24 Q26 24 27 20 Z" fill="#109a28" />
          </svg>
          <span className="flex-1 text-center">Delete</span>
        </button>
        <button className={action}>
          <svg className="shrink-0" width="40" height="28" viewBox="0 0 40 28">
            <path d="M0 28V14L3 11V28Z" fill="#000070" />
            <path d="M3 28V10L5 13V28Z" fill="#f0f" />
            <path d="M5 28V6L8 2L11 6V28Z" fill="#00f" />
            <path d="M11 28V9L14 11V28Z" fill="#0ff" />
            <path d="M14 28V11L19 13V28Z" fill="#0d0" />
            <path d="M19 28V5L23 0L28 3V28Z" fill="#ff0" />
            <path d="M27 28V4L31 12V28Z" fill="#800000" />
            <path d="M31 28V13L36 9L40 13V28Z" fill="#f00" />
          </svg>
          <span className="flex-1 text-center">Refs</span>
        </button>
        <Check label="Edit" className={`mt-[3px] ml-1.5 h-6 w-[71px] bg-[#f0f0f0] text-[15px] ${ui}`} />
      </aside>
    </div>
  );
}

const tabs = [
  { name: 'Measures', width: 92, cls: 'w-[92px] z-10' },
  { name: 'Luminance', width: 98, cls: 'w-[98px] -ml-3' },
  { name: 'Gamma', width: 78, cls: 'w-[78px] -ml-3' },
  { name: 'RGB Levels', width: 102, cls: 'w-[102px] -ml-3' },
];

const menu = ['File', 'Edit', 'View', 'Measures', 'Graphs', 'Advanced', 'Window', 'Help'];

export default function App() {
  const [tab, setTab] = useState('Measures');

  return (
    <div className={`flex min-h-screen flex-col bg-[#f0f0f0] text-black ${segoe}`}>
      <header className="flex h-[29px] items-center bg-white pl-0.5">
        <AppLogo />
        <h1 className="ml-[5px] flex-1 text-[14px]">
          HCFR Colorimeter - 3.5.1.4 - [Panasonic 60 GT50W 2.2 GAMMA 120 Nits THX CINEMA SERVICE MENU Calibrado Perfilado]
        </h1>
        <div className="flex gap-[46px] pr-[26px]">
          <button aria-label="Minimize"><svg width="12" height="12" viewBox="0 0 12 12" stroke="#000"><path d="M0 5.500H12" /></svg></button>
          <button aria-label="Restore"><svg width="12" height="12" viewBox="0 0 12 12" fill="none" stroke="#000"><path d="M.5 2.500H9.500V11.500H.5ZM2.500 2.500V.5H11.500V9.500H9.500" /></svg></button>
          <button aria-label="Close"><svg width="12" height="12" viewBox="0 0 12 12" stroke="#000"><path d="M0 0L12 12M12 0L0 12" /></svg></button>
        </div>
      </header>

      <nav className={`flex h-[30px] items-center border-b-2 border-[#b9bdc2] pl-1.5 ${bluebar}`}>
        <span className="mr-1.5 h-4 border-l-3 border-dotted border-[#9db0cc]" />
        <AppLogo />
        <ul className="ml-1.5 flex flex-1 gap-6 text-[14px] text-[#222]">
          {menu.map((m) => (
            <li key={m}>
              <button><u className="underline-offset-2">{m[0]}</u>{m.slice(1)}</button>
            </li>
          ))}
        </ul>
        <div className="flex gap-3 pr-[26px]">
          <button aria-label="Minimize document"><svg width="12" height="12" viewBox="0 0 12 12"><rect x="1" y="9" width="8" height="2.500" /></svg></button>
          <button aria-label="Restore document"><svg width="12" height="12" viewBox="0 0 12 12" fill="none" stroke="#000" strokeWidth="1.400"><path d="M3 4V1H11V7H9M1 5H9V11H1ZM3 2H11M1 6H9" /></svg></button>
          <button aria-label="Close document"><svg width="12" height="12" viewBox="0 0 12 12" stroke="#000" strokeWidth="2.600"><path d="M1 1L11 11M11 1L1 11" /></svg></button>
        </div>
      </nav>

      <div className="flex h-[55px] gap-[5px] bg-[#ecf1fa] pt-0.5 pl-px">
        {toolGroups.map((g, i) => <ToolGroup key={i} tools={g} />)}
      </div>

      <div className="flex flex-1 flex-col border-l-2 border-[#b0b0b0] pr-[3px]">
        <div className="flex flex-1">
          <main className="flex min-w-0 flex-1 flex-col gap-1 border-t-4 border-[#6f6f6f] border-b-4 border-b-[#b5b5b5] bg-[#8b8b8b] pr-[3px] pl-px">
            <div className="flex h-[77px] gap-[3px]">
              <Panel title="View" className="min-w-0 flex-1" body="flex items-start pt-0.5">
                <Combo label="View" value="Color Checker" className="mt-0.5 w-[250px] shrink-0" />
                <p className={`ml-3 h-[34px] min-w-0 flex-1 overflow-hidden border border-[#a0a0a0] border-r-white border-b-white bg-[#f0f0f0] text-[20px] leading-[22px] font-bold whitespace-pre ${arial}`}>
                  Color Space: HDTV Rec709 , White Point: D65, EOTF:  SDR, Power law (black compen...
                </p>
                <div className="mt-0.5 mr-2 ml-2 flex flex-col gap-0.5">
                  <button aria-label="Previous" className={`flex h-[15px] w-[22px] items-center justify-center ${raised}`}>
                    <svg width="7" height="4" viewBox="0 0 7 4"><path d="M0 4H7L3.500 0Z" /></svg>
                  </button>
                  <button aria-label="Next" className={`flex h-[15px] w-[22px] items-center justify-center ${raised}`}>
                    <svg width="7" height="4" viewBox="0 0 7 4"><path d="M0 0H7L3.500 4Z" /></svg>
                  </button>
                </div>
              </Panel>
              <Panel title="Sensor" className="w-[386px] shrink-0" body={`flex pl-1 pr-2.5 text-[15px] leading-[21px] text-[#222] ${ui}`}>
                <div className="flex-1">
                  <div>Simulated sensor</div>
                  <div className="flex items-center">
                    <span className="w-[135px]">Adaptive</span>
                    <button aria-label="Start sensor">
                      <svg className="block" width="15" height="15" viewBox="0 0 15 15"><path d="M0 0L15 7L0 15Z" fill="#7be052" stroke="#61c43c" /></svg>
                    </button>
                  </div>
                </div>
                <button aria-label="Configure sensor" className="self-end"><SensorConfig /></button>
              </Panel>
              <Panel title="Generator" className="w-[153px] shrink-0" body={`flex justify-between pl-0.5 pr-1 text-[15px] leading-[21px] text-[#222] ${ui}`}>
                <span>GDI</span>
                <button aria-label="Configure generator" className="self-end"><SensorConfig /></button>
              </Panel>
              <Panel title="Parameters" className="w-[193px] shrink-0" body={`pl-1.5 pt-px text-[15px] leading-[21px] ${ui}`}>
                <Check label="Reference" />
                <Check label="XYZ Adjustment" disabled />
              </Panel>
            </div>

            <ColorRow />

            <div className="flex flex-1 gap-[5px] pt-px">
              <SelectedColor />
              <Information />
            </div>
          </main>
          <VScroll thumb="h-[97%]" />
        </div>
        <div className="mr-5">
          <HScroll thumb="w-[98%]" />
        </div>
      </div>

      <div className="mt-1 flex h-[23px] items-center border-t-2 border-[#333] bg-[#f0f0f0]">
        <div className="flex border-r border-b border-black bg-black">
          {[
            { label: 'Close tab', d: 'M1 1L10 10M10 1L1 10', w: 2 },
            { label: 'Previous tab', d: 'M8 1L3 5.500L8 10Z', w: 1 },
            { label: 'Next tab', d: 'M3 1L8 5.500L3 10Z', w: 1 },
          ].map((b) => (
            <button key={b.label} aria-label={b.label} className={`flex h-5 w-[22px] items-center justify-center ${raised}`}>
              <svg width="11" height="11" viewBox="0 0 11 11" stroke="#000" strokeWidth={b.w}><path d={b.d} /></svg>
            </button>
          ))}
        </div>
        <div className="flex flex-1" role="tablist">
          {tabs.map((t) => (
            <button
              key={t.name}
              role="tab"
              aria-selected={t.name === tab}
              onClick={() => setTab(t.name)}
              className={`relative h-[22px] text-[12px] ${t.cls} ${t.name === tab ? `font-extrabold ${segoe}` : `text-[#333] ${arial}`}`}
            >
              <svg className="absolute inset-0" width={t.width} height="22" viewBox={`0 0 ${t.width} 22`}>
                <path d={`M1 0L12 21.500H${t.width - 12}L${t.width - 1} 0`} fill={t.name === tab ? '#fff' : '#f0f0f0'} stroke="#111" strokeWidth="1.300" />
              </svg>
              <span className="relative">{t.name}</span>
            </button>
          ))}
        </div>
        <svg className="mr-[100px]" width="18" height="18" viewBox="0 0 18 20">
          <path d="M0 0H18V13L14 19H10L8 16L7 19H4L0 13Z" fill="#6d6a00" stroke="#222" />
          <path d="M2 4H12V10H7L2 8Z" fill="#fff" />
          <path d="M4 6H8M8 4V9M10 5L13 9" stroke="#f00" strokeWidth="2.500" />
          <path d="M10 12H17L15 16V18H12V16Z" fill="#ff0" />
        </svg>
        <Check label="Reference" className={`pr-1.5 text-[14px] ${arial}`} />
      </div>

      <footer className={`flex h-[24px] items-end gap-1 border-b-2 border-[#3a3f47] pl-0.5 text-[14px] ${bluebar}`}>
        <span className="flex-1 leading-[20px]">Ready</span>
        <span className="h-5 w-[94px] border-t-2 border-l border-[#9db8dc]" />
        <span className="h-5 w-[35px] border-t-2 border-l border-[#9db8dc] pl-0.5 leading-[18px]">CAP</span>
        <span className="h-5 w-[41px] border-t-2 border-l border-[#9db8dc] pl-0.5 leading-[18px]">NUM</span>
        <span className="h-5 w-10 border-t-2 border-l border-[#9db8dc]" />
      </footer>
    </div>
  );
}
